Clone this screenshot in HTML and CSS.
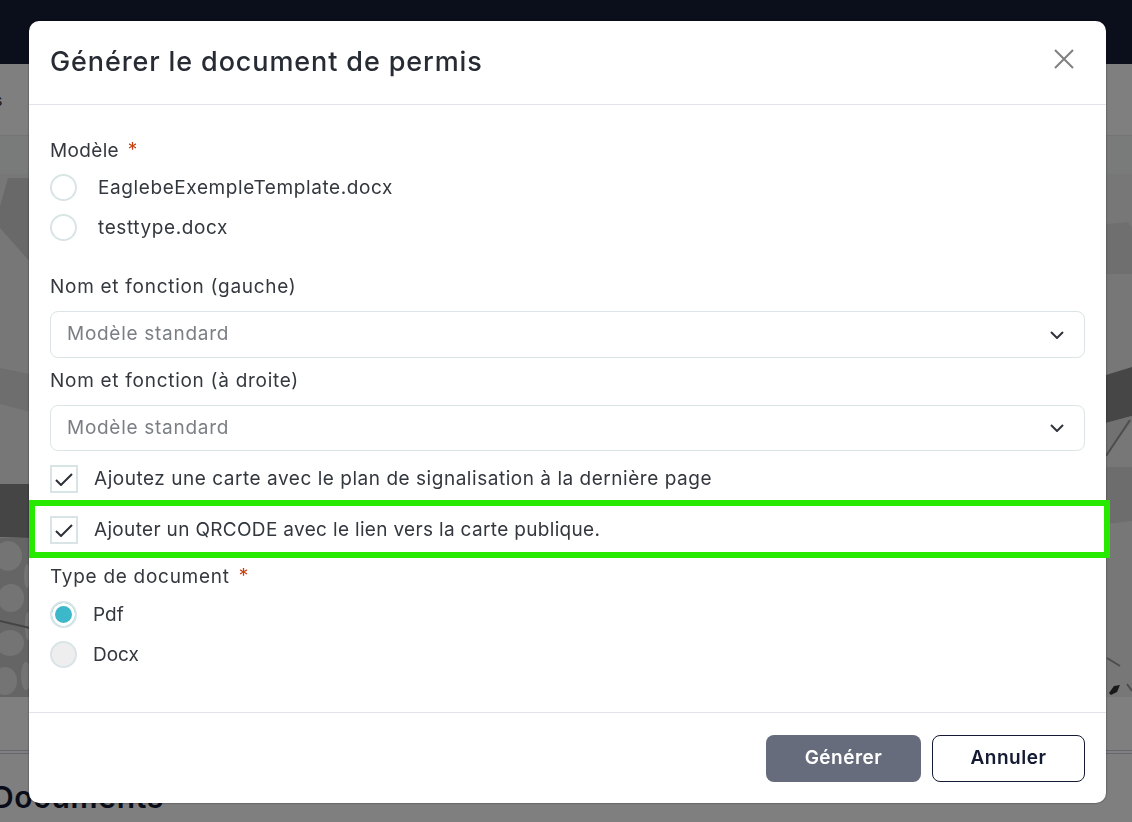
FILE: index.html
```html
<!DOCTYPE html>
<html lang="fr">
<head>
<meta charset="utf-8">
<title>Générer le document de permis</title>
<link rel="stylesheet" href="styles.css">
</head>
<body>
<div class="page">
  <header class="nav"></header>
  <div class="toolbar"><span class="crumb">s</span></div>
  <div class="map">
    <svg class="map-art" viewBox="0 0 1132 561" preserveAspectRatio="none" aria-hidden="true">
      <rect width="1132" height="561" fill="#efefef"/>
      <rect width="1132" height="38" fill="#f2f4f5"/>
      <path d="M0 70 L8 42 L30 42 L30 126 L0 92Z" fill="#d2d2d2"/>
      <path d="M0 232 L30 238 L30 276 L0 268Z" fill="#dcdcdc"/>
      <path d="M0 348 L30 348 L30 402 L0 401Z" fill="#8a8a8a"/>
      <rect x="0" y="402" width="30" height="159" fill="#cacaca"/>
      <g fill="#e8e8e8">
        <ellipse cx="8" cy="420" rx="14" ry="15"/>
        <ellipse cx="11" cy="462" rx="13" ry="14"/>
        <ellipse cx="10" cy="507" rx="14" ry="13"/>
        <ellipse cx="5" cy="545" rx="12" ry="14"/>
        <ellipse cx="27" cy="440" rx="3" ry="12"/>
        <ellipse cx="28" cy="490" rx="3" ry="14"/>
        <ellipse cx="26" cy="540" rx="5" ry="14"/>
      </g>
      <path d="M0 485 L30 492" stroke="#8a8a8a" stroke-width="2"/>
      <path d="M1106 88 L1128 86 L1132 92 L1132 138 L1106 138Z" fill="#dedede"/>
      <path d="M1106 239 L1132 231 L1132 280 L1106 287Z" fill="#8c8c8c"/>
      <path d="M1106 287 L1132 280 L1132 286 L1106 318Z" fill="#e2e2e2"/>
      <path d="M1106 320 L1130 284" stroke="#999" stroke-width="2" fill="none"/>
      <path d="M1106 331 L1132 331 L1132 385 L1106 388Z" fill="#dbdbdb"/>
      <path d="M1109 557 L1114 550 L1120 549 L1117 556 L1111 559Z" fill="#333"/>
      <path d="M1107 522 L1120 530" stroke="#999" stroke-width="2"/>
      <path d="M1127 548 L1132 555" stroke="#999" stroke-width="2"/>
    </svg>
  </div>
  <div class="strip"></div>
  <h2 class="docs">Documents</h2>
</div>
<div class="overlay"></div>
<section class="modal" role="dialog" aria-labelledby="modal-title">
  <header class="modal-head">
    <h1 id="modal-title" class="modal-title">Générer le document de permis</h1>
    <svg class="close" viewBox="0 0 20 20" aria-hidden="true"><path d="M1 1 L19 19 M19 1 L1 19"/></svg>
  </header>
  <form class="modal-body">
    <div class="label model-label">Modèle <span class="req">*</span></div>
    <div class="radio-list wide">
      <label class="radio-row"><span class="radio"></span><span>EaglebeExempleTemplate.docx</span></label>
      <label class="radio-row"><span class="radio"></span><span>testtype.docx</span></label>
    </div>
    <div class="label sel-label first">Nom et fonction (gauche)</div>
    <div class="select"><span class="lift">Modèle standard</span><svg class="chev" viewBox="0 0 14 8" aria-hidden="true"><path d="M1 1 L7 7 L13 1"/></svg></div>
    <div class="label sel-label">Nom et fonction (à droite)</div>
    <div class="select short"><span class="lift">Modèle standard</span><svg class="chev" viewBox="0 0 14 8" aria-hidden="true"><path d="M1 1 L7 7 L13 1"/></svg></div>
    <label class="check-row"><span class="check"><svg viewBox="0 0 18 13" aria-hidden="true"><path d="M1 7 L6 12 L17 1"/></svg></span><span class="lift">Ajoutez une carte avec le plan de signalisation à la dernière page</span></label>
    <label class="check-row marked"><span class="check"><svg viewBox="0 0 18 13" aria-hidden="true"><path d="M1 7 L6 12 L17 1"/></svg></span><span class="lift">Ajouter un QRCODE avec le lien vers la carte publique.</span></label>
    <div class="label type-label">Type de document <span class="req">*</span></div>
    <div class="radio-list narrow">
      <label class="radio-row"><span class="radio on"></span><span>Pdf</span></label>
      <label class="radio-row"><span class="radio off"></span><span>Docx</span></label>
    </div>
  </form>
  <footer class="modal-foot">
    <button class="btn primary" type="button">Générer</button>
    <button class="btn ghost" type="button">Annuler</button>
  </footer>
</section>
</body>
</html>
```
FILE: styles.css
```css
* { box-sizing: border-box; }
html, body { margin: 0; height: 822px; overflow: hidden; }
body { font-family: "Inter", "Open Sans", sans-serif; color: #33373e; background: #fff; }

.page { display: flex; flex-direction: column; height: 822px; }
.nav { height: 64px; flex: none; background: #161e38; }
.toolbar { height: 72px; flex: none; background: #fff; border-bottom: 1px solid #e8e8e8; display: flex; align-items: center; }
.crumb { margin-left: -6px; font-size: 16px; color: #333; }
.map { height: 561px; flex: none; }
.map-art { display: block; width: 100%; height: 561px; }
.strip { height: 57px; flex: none; background: #fff; border-bottom: 4px double #c9ced6; }
.docs { margin: 25px 0 0 -8px; font-size: 30px; line-height: 36px; font-weight: 600; letter-spacing: .7px; color: #141a33; }

.overlay { position: fixed; inset: 0; background: rgba(0, 0, 0, .5); }

.modal { position: fixed; left: 29px; top: 21px; width: 1077px; height: 782px; background: #fff; border-radius: 10px; box-shadow: 0 0 2px rgba(0, 0, 0, .6); display: flex; flex-direction: column; }
.modal-head { height: 84px; flex: none; padding: 0 32px 0 21px; display: flex; align-items: center; justify-content: space-between; border-bottom: 1px solid #e2e4ea; }
.modal-title { margin: 0 0 2px; font-size: 27px; font-weight: 500; letter-spacing: .88px; color: #272b33; }
.close { width: 20px; height: 20px; margin-bottom: 7px; fill: none; stroke: #808080; stroke-width: 2; }

.modal-body { flex: 1; padding: 0 21px; display: flex; flex-direction: column; font-size: 19px; }
.lift { padding-bottom: 2px; }
.label { height: 24px; line-height: 26px; letter-spacing: .72px; color: #35393f; }
.model-label { margin-top: 33px; letter-spacing: .35px; }
.req { color: #c8400f; margin-left: 3px; position: relative; top: -1px; }

.radio-list { display: flex; flex-direction: column; margin-top: 5px; }
.radio-row { height: 40px; display: flex; align-items: center; gap: 16px; }
.wide { letter-spacing: .6px; }
.wide .radio-row { gap: 21px; }
.narrow { margin-top: 6px; letter-spacing: 0; }
.radio { width: 27px; height: 27px; border-radius: 50%; border: 2px solid #d9e4e6; background: #fff; flex: none; }
.radio.on { background: #3db8cb; box-shadow: inset 0 0 0 3px #fff; }
.radio.off { background: #eeeeee; }

.sel-label { margin-top: 10px; }
.sel-label.first { margin-top: 27px; }
.select { height: 47px; margin-top: 13px; padding: 0 20px 0 16px; border: 1px solid #dbe4e6; border-radius: 8px; display: flex; align-items: center; justify-content: space-between; letter-spacing: .72px; color: #7b7f85; }
.select.short { height: 46px; margin-bottom: 3px; }
.chev { width: 14px; height: 8px; fill: none; stroke: #30343c; stroke-width: 2; }

.check-row { height: 50px; display: flex; align-items: center; gap: 16px; letter-spacing: .53px; }
.check { width: 28px; height: 28px; border: 2px solid #d9e4e6; display: flex; align-items: center; justify-content: center; flex: none; }
.check svg { width: 18px; height: 13px; fill: none; stroke: #2c3038; stroke-width: 2; }
.marked { position: relative; margin-top: 1px; letter-spacing: .33px; }
.marked::after { content: ""; position: absolute; left: -21px; right: -25px; top: -5px; bottom: -3px; border: 6px solid #27e900; pointer-events: none; }
.type-label { margin-top: 9px; }

.modal-foot { height: 91px; flex: none; padding: 22px 21px 0 0; display: flex; justify-content: flex-end; align-items: flex-start; gap: 11px; border-top: 1px solid #e2e4ea; }
.btn { height: 47px; padding: 0 0 2px; border-radius: 8px; font: 600 19px "Inter", sans-serif; letter-spacing: .5px; }
.primary { width: 155px; background: #676c7c; border: 0; color: #fff; }
.ghost { width: 153px; background: #fff; border: 1px solid #141a33; color: #141a33; }
```
